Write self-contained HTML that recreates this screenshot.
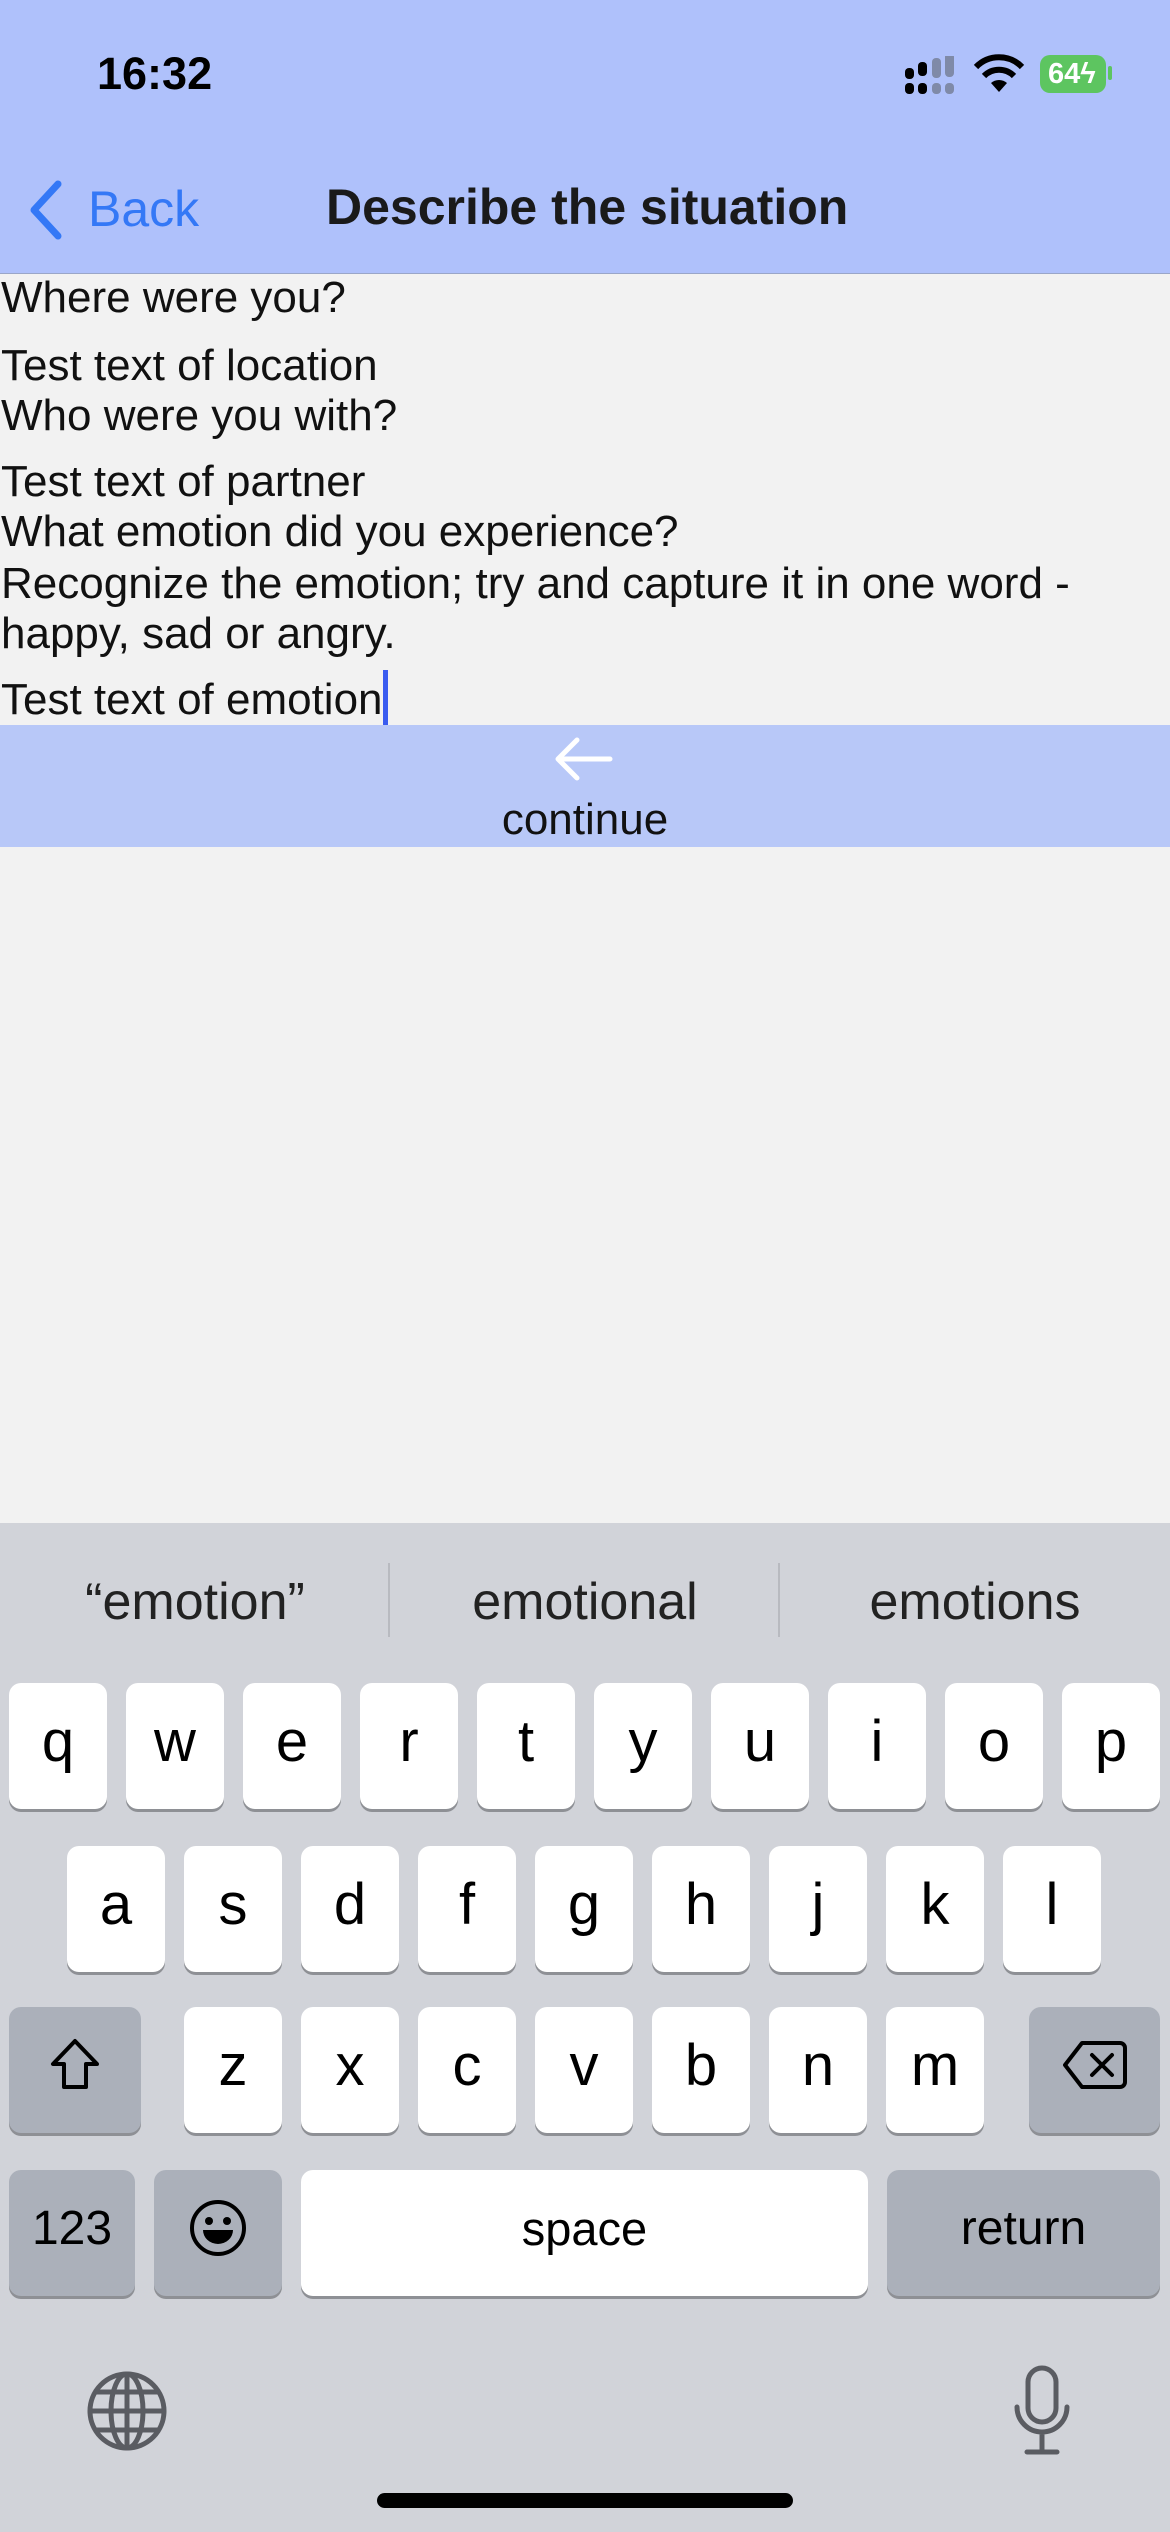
<!DOCTYPE html>
<html><head><meta charset="utf-8"><style>
*{margin:0;padding:0;box-sizing:border-box}
body{width:1170px;height:2532px;position:relative;background:#F2F2F2;font-family:"Liberation Sans",sans-serif;overflow:hidden}
.a{position:absolute}
.hdr{left:0;top:0;width:1170px;height:274px;background:#AFC1FB;border-bottom:1px solid #9AA6C8}
.t{left:1px;font-size:44px;color:#111;white-space:nowrap;line-height:50px}
.kb{left:0;top:1523px;width:1170px;height:1009px;background:#D1D3D9}
.k{position:absolute;background:#fff;border-radius:12px;box-shadow:0 3px 0 #8E9095;height:126px;display:flex;align-items:center;justify-content:center;font-size:58px;color:#000;padding-bottom:10px}
.g{background:#ABB0BA}
.s{position:absolute;top:1572px;font-size:52px;color:#222;text-align:center;width:390px}
</style></head><body>
<div class="a hdr"></div>
<div class="a" style="left:97px;top:48px;font-size:45px;font-weight:bold;color:#000">16:32</div>
<svg class="a" style="left:905px;top:56px" width="56" height="40"><g fill="#000"><rect x="0" y="12" width="9" height="11" rx="4"/><rect x="0" y="27" width="9" height="11" rx="4"/><rect x="13" y="6" width="9" height="14" rx="4"/><rect x="13" y="27" width="9" height="11" rx="4"/></g><g fill="#7F8AA8"><rect x="27" y="2" width="9" height="20" rx="4"/><rect x="27" y="27" width="9" height="11" rx="4"/><rect x="40" y="-3" width="9" height="24" rx="4"/><rect x="40" y="27" width="9" height="11" rx="4"/></g></svg>
<svg class="a" style="left:973px;top:52px" width="52" height="42" viewBox="0 0 52 42"><path d="M26 40 L18 31 A12 12 0 0 1 34 31 Z" fill="#000"/><path d="M11 24 A21 21 0 0 1 41 24" stroke="#000" stroke-width="6" fill="none"/><path d="M3 15 A32 32 0 0 1 49 15" stroke="#000" stroke-width="6" fill="none"/></svg>
<div class="a" style="left:1040px;top:55px;width:66px;height:38px;background:#5DC560;border-radius:10px;color:#fff;font-weight:bold;font-size:29px;line-height:38px;padding-left:8px">64ϟ</div>
<div class="a" style="left:1108px;top:66px;width:4px;height:14px;background:#5DC560;border-radius:2px"></div>
<svg class="a" style="left:26px;top:180px" width="40" height="60"><path d="M32 4 L8 30 L32 56" stroke="#3478F6" stroke-width="7" fill="none" stroke-linecap="round" stroke-linejoin="round"/></svg>
<div class="a" style="left:88px;top:180px;font-size:50px;color:#3478F6">Back</div>
<div class="a" style="left:326px;top:178px;font-size:50px;font-weight:bold;color:#1a1a1a">Describe the situation</div>
<div class="a t" style="top:273px">Where were you?</div>
<div class="a t" style="top:341px">Test text of location</div>
<div class="a t" style="top:391px">Who were you with?</div>
<div class="a t" style="top:457px">Test text of partner</div>
<div class="a t" style="top:507px">What emotion did you experience?</div>
<div class="a t" style="top:559px">Recognize the emotion; try and capture it in one word -</div>
<div class="a t" style="top:609px">happy, sad or angry.</div>
<div class="a t" style="top:675px">Test text of emotion</div>
<div class="a" style="left:383px;top:670px;width:5px;height:55px;background:#3A5CF0"></div>
<div class="a" style="left:0;top:725px;width:1170px;height:122px;background:#B8C8F8"></div>
<svg class="a" style="left:553px;top:736px" width="62" height="46"><path d="M57 23 H6 M24 4 L5 23 L24 42" stroke="#fff" stroke-width="5" fill="none" stroke-linecap="round" stroke-linejoin="round"/></svg>
<div class="a" style="left:0;top:795px;width:1170px;text-align:center;font-size:44px;color:#111">continue</div>
<div class="a kb"></div>
<div class="s" style="left:0">“emotion”</div>
<div class="s" style="left:390px">emotional</div>
<div class="s" style="left:780px">emotions</div>
<div class="a" style="left:388px;top:1563px;width:2px;height:74px;background:#B8BAC0"></div>
<div class="a" style="left:778px;top:1563px;width:2px;height:74px;background:#B8BAC0"></div>
<div class="k" style="left:9px;top:1683px;width:98px">q</div>
<div class="k" style="left:126px;top:1683px;width:98px">w</div>
<div class="k" style="left:243px;top:1683px;width:98px">e</div>
<div class="k" style="left:360px;top:1683px;width:98px">r</div>
<div class="k" style="left:477px;top:1683px;width:98px">t</div>
<div class="k" style="left:594px;top:1683px;width:98px">y</div>
<div class="k" style="left:711px;top:1683px;width:98px">u</div>
<div class="k" style="left:828px;top:1683px;width:98px">i</div>
<div class="k" style="left:945px;top:1683px;width:98px">o</div>
<div class="k" style="left:1062px;top:1683px;width:98px">p</div>
<div class="k" style="left:67px;top:1846px;width:98px">a</div>
<div class="k" style="left:184px;top:1846px;width:98px">s</div>
<div class="k" style="left:301px;top:1846px;width:98px">d</div>
<div class="k" style="left:418px;top:1846px;width:98px">f</div>
<div class="k" style="left:535px;top:1846px;width:98px">g</div>
<div class="k" style="left:652px;top:1846px;width:98px">h</div>
<div class="k" style="left:769px;top:1846px;width:98px">j</div>
<div class="k" style="left:886px;top:1846px;width:98px">k</div>
<div class="k" style="left:1003px;top:1846px;width:98px">l</div>
<div class="k g" style="left:9px;top:2007px;width:132px"><svg width="52" height="56"><path d="M26 4 L4 27 H15 V50 H37 V27 H48 Z" stroke="#000" stroke-width="4" fill="none" stroke-linejoin="round"/></svg></div>
<div class="k" style="left:184px;top:2007px;width:98px">z</div>
<div class="k" style="left:301px;top:2007px;width:98px">x</div>
<div class="k" style="left:418px;top:2007px;width:98px">c</div>
<div class="k" style="left:535px;top:2007px;width:98px">v</div>
<div class="k" style="left:652px;top:2007px;width:98px">b</div>
<div class="k" style="left:769px;top:2007px;width:98px">n</div>
<div class="k" style="left:886px;top:2007px;width:98px">m</div>
<div class="k g" style="left:1029px;top:2007px;width:131px"><svg width="66" height="52"><path d="M20 4 H58 A5 5 0 0 1 63 9 V43 A5 5 0 0 1 58 48 H20 L3 26 Z" stroke="#000" stroke-width="4" fill="none" stroke-linejoin="round"/><path d="M30 16 L50 36 M50 16 L30 36" stroke="#000" stroke-width="4" stroke-linecap="round"/></svg></div>
<div class="k g" style="left:9px;top:2170px;width:126px;font-size:48px">123</div>
<div class="k g" style="left:154px;top:2170px;width:128px"><svg width="60" height="60"><circle cx="30" cy="30" r="26" stroke="#000" stroke-width="4" fill="none"/><circle cx="21" cy="23" r="4"/><circle cx="39" cy="23" r="4"/><path d="M15 32 H45 A15 14 0 0 1 15 32 Z" fill="#000"/></svg></div>
<div class="k" style="left:301px;top:2170px;width:567px;font-size:47px">space</div>
<div class="k g" style="left:887px;top:2170px;width:273px;font-size:48px">return</div>
<svg class="a" style="left:86px;top:2370px" width="82" height="82"><g stroke="#5A5C62" stroke-width="5" fill="none"><circle cx="41" cy="41" r="37"/><ellipse cx="41" cy="41" rx="16" ry="37"/><path d="M41 4 V78 M4 41 H78 M10 22 H72 M10 60 H72"/></g></svg>
<svg class="a" style="left:1012px;top:2365px" width="60" height="92"><g stroke="#5A5C62" stroke-width="5" fill="none" stroke-linecap="round"><rect x="16" y="3" width="28" height="54" rx="14"/><path d="M5 42 A25 25 0 0 0 55 42 M30 68 V87 M15 87 H45"/></g></svg>
<div class="a" style="left:377px;top:2493px;width:416px;height:15px;border-radius:8px;background:#000"></div>
</body></html>
